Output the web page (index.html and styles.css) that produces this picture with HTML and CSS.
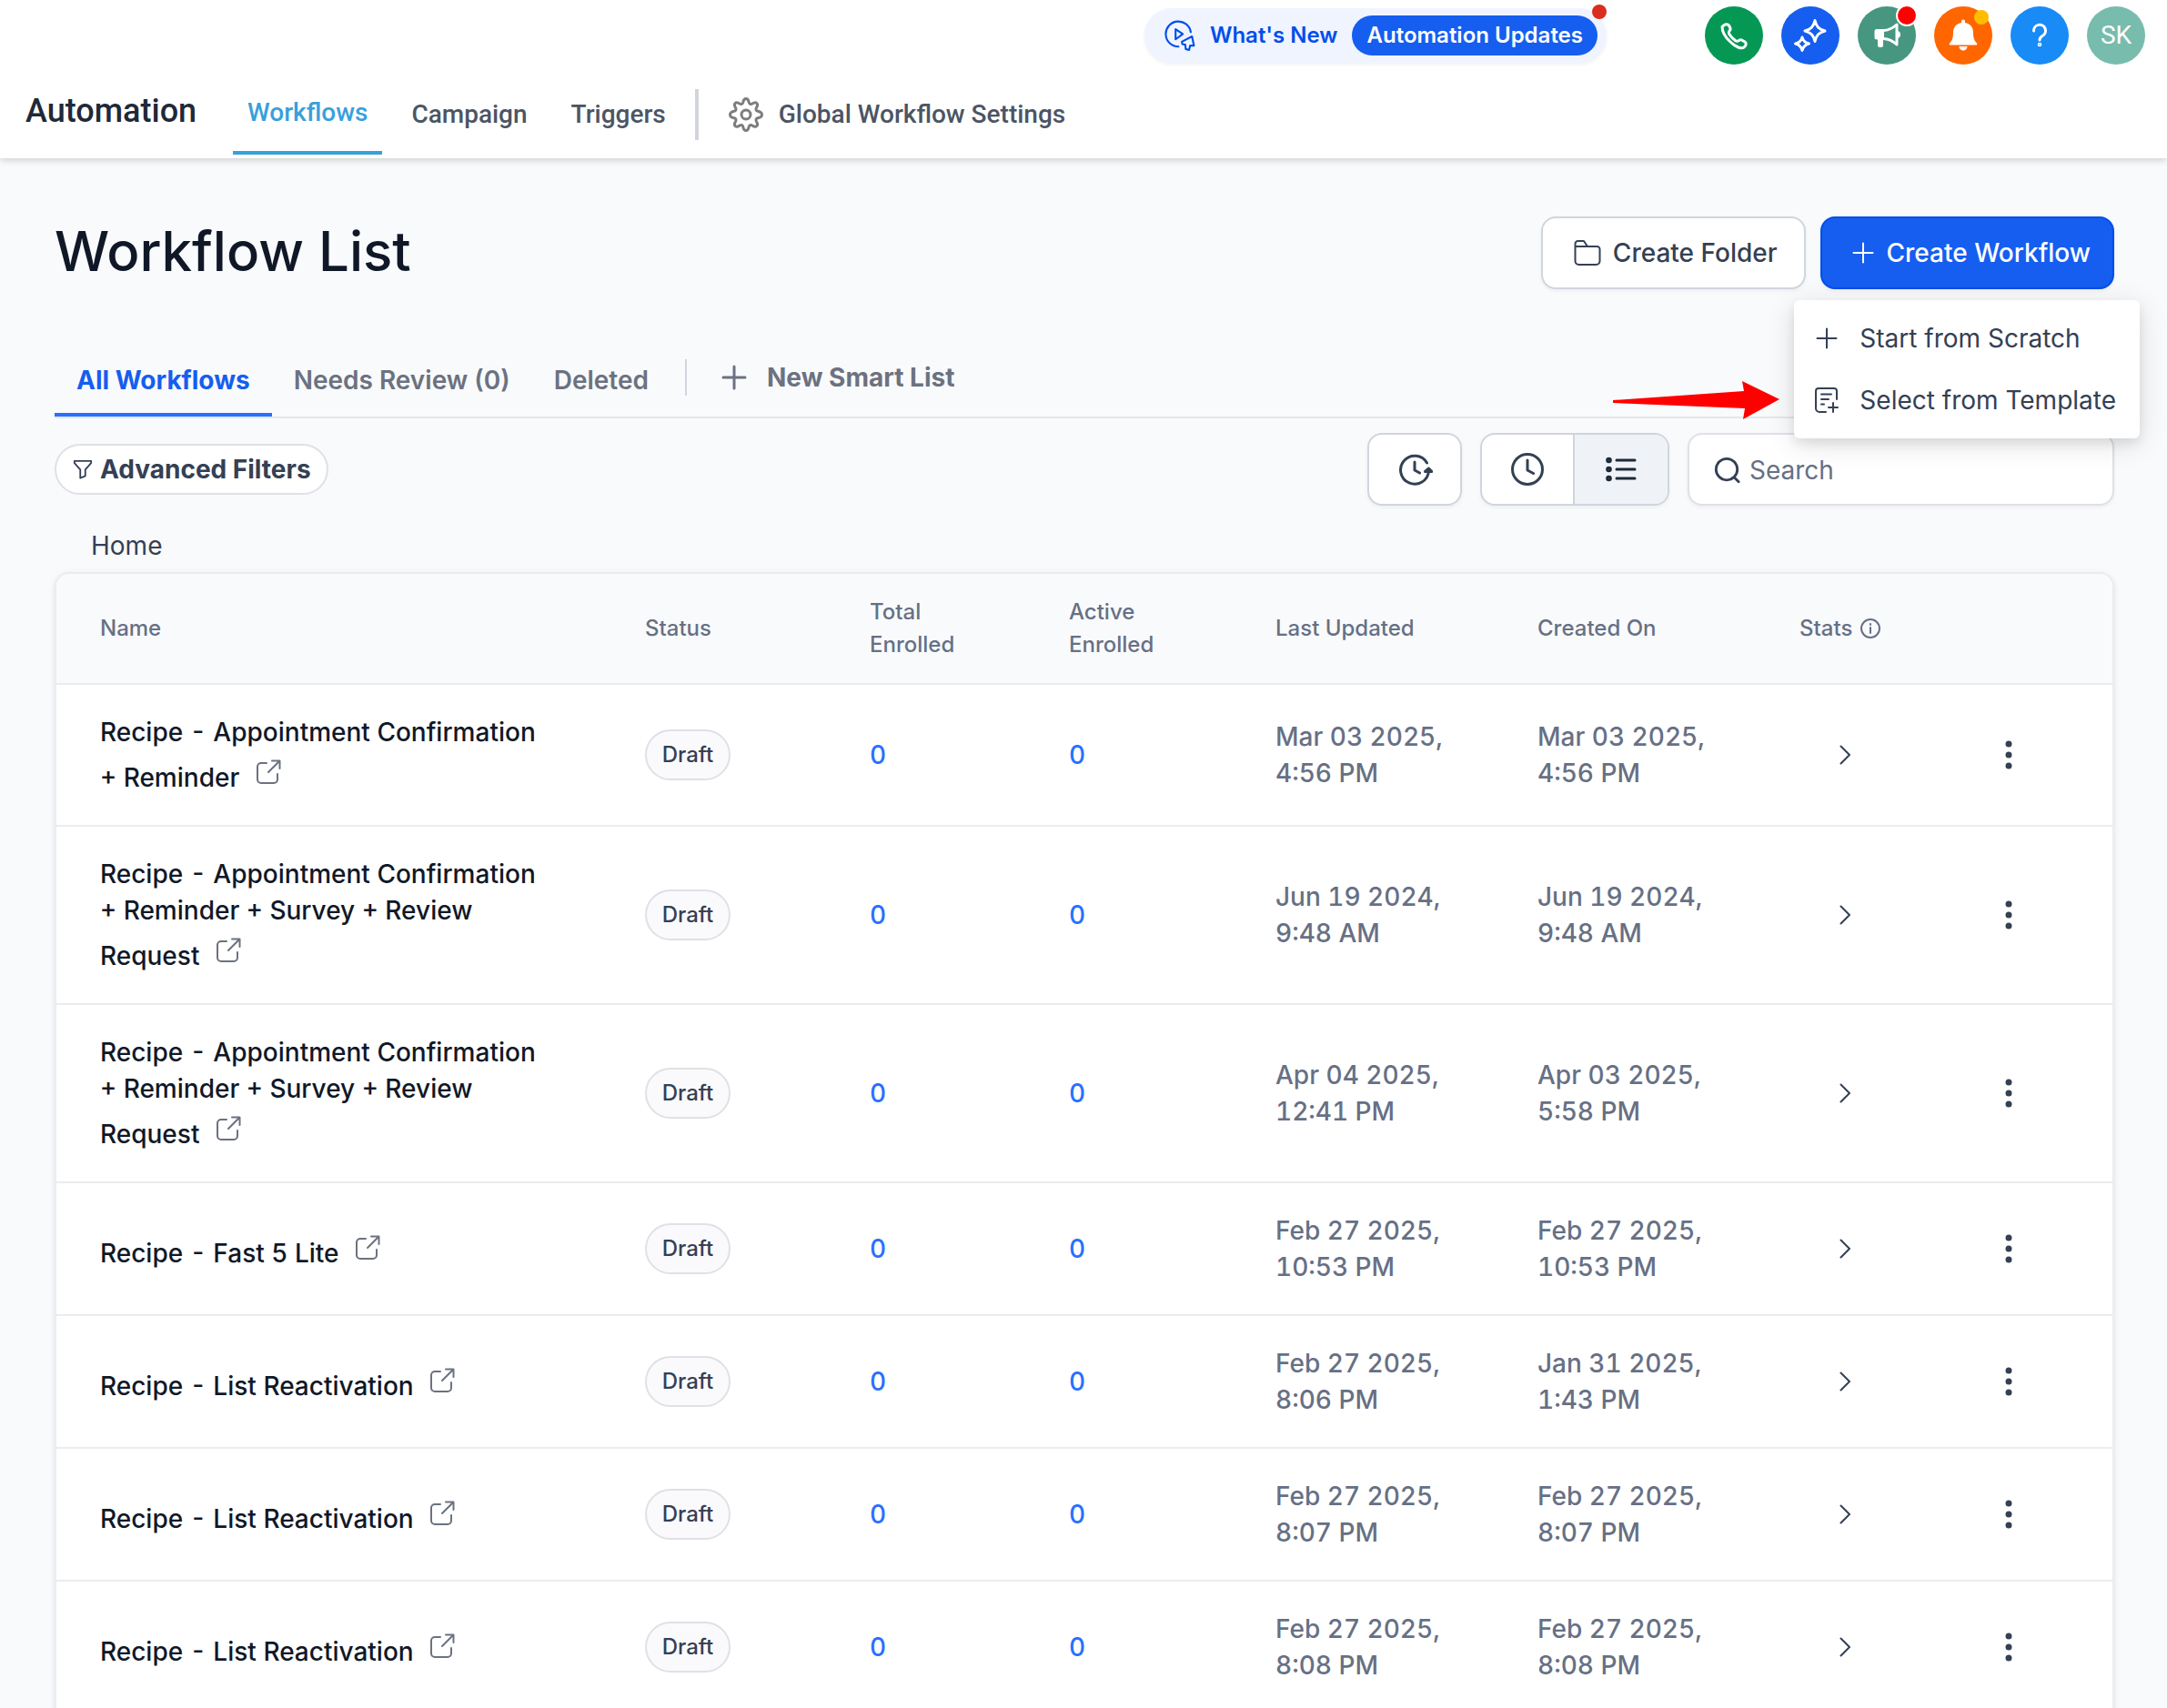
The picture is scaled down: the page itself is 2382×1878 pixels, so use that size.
FILE: index.html
```html
<!DOCTYPE html>
<html lang="en">
<head>
  <meta charset="utf-8">
  <title>Workflow List</title>
  <link rel="stylesheet" href="styles.css">
</head>
<body>
  <!-- icons used more than once -->
  <svg width="0" height="0" class="sprite">
    <symbol id="icon-plus" viewBox="0 0 28 28">
      <path d="M14 3.500v21M3.500 14h21" />
    </symbol>
    <symbol id="icon-open" viewBox="0 0 28 28">
      <path d="M12 4H6a4 4 0 0 0-4 4v14a4 4 0 0 0 4 4h14a4 4 0 0 0 4-4v-6M18 1.500h8.500v8.500M26 2L14 14" />
    </symbol>
    <symbol id="icon-chevron" viewBox="0 0 28 28">
      <path d="M9.500 4.500l9.500 9.500-9.500 9.500" />
    </symbol>
    <symbol id="icon-dots" viewBox="0 0 36 36">
      <circle cx="18" cy="6" r="3.500" /><circle cx="18" cy="18" r="3.500" /><circle cx="18" cy="30" r="3.500" />
    </symbol>
  </svg>

  <header class="header">
    <div class="topbar">
      <div class="whats-new">
        <svg class="play-icon" viewBox="0 0 32 32">
          <path d="M14.500 27.500A13 13 0 1 1 27.200 12.500" />
          <path d="M11.500 9.500v10.500l7.500-5.500z" />
          <path d="M18 22.500l10.500-5.500 2 9.500h-4l-1 4.500-3.500-1-.5-4.500-3-.5z" />
        </svg>
        <a href="#" class="whats-new-link">What's New</a>
        <button type="button" class="updates">Automation Updates</button>
        <span class="pill-dot"></span>
      </div>
      <div class="actions">
        <button type="button" class="circle green" aria-label="Phone">
          <svg viewBox="0 0 40 40" class="line">
            <path d="M7 10.500C10 7 13 7 14.500 9l1.500 3c1 2.500-3 3-1.500 6 2 3.500 4.500 6 7.500 8 3 1.500 4-2.500 6.500-1l3.500 2c2 1.500 1.500 4-1 6-3 2-9 0-15-6-6-5.500-9-11.500-9-16.500z" />
          </svg>
        </button>
        <button type="button" class="circle blue" aria-label="AI assistant">
          <svg viewBox="0 0 40 40" class="line">
            <path d="M25 3.500c1.500 6.500 4 9.500 11 11.500-7 2-9.500 5-11 11.500-1.500-6.500-4-9.500-11-11.500 7-2 9.500-5 11-11.500z" />
            <path d="M11 22c1 4 3 6 7.500 7-4.500 1-6.500 3.500-7.500 7.500-1-4-3-6.500-7.500-7.500 4.500-1 6.500-3 7.500-7z" />
          </svg>
        </button>
        <button type="button" class="circle teal" aria-label="Announcements">
          <svg viewBox="0 0 40 40">
            <path fill="#fff" d="M9 13h8v11.500h-1V31a2 2 0 0 1-2 2h-2a2 2 0 0 1-2-2v-6.500H9A2.500 2.500 0 0 1 6.500 22v-6.500A2.500 2.500 0 0 1 9 13z" />
            <path fill="none" stroke="#fff" stroke-width="3" stroke-linejoin="round" d="M16 14.500c5 0 10-2 15-6.500v22c-5-4.500-10-6.500-15-6.500" />
            <path fill="#fff" d="M31 15a4 4 0 0 1 0 8z" />
          </svg>
          <span class="dot red"></span>
        </button>
        <button type="button" class="circle orange" aria-label="Notifications">
          <svg viewBox="0 0 40 40">
            <path fill="#fff" d="M20 2.500a2 2 0 0 1 2 2v1.500c5.500 1 9 5 9 10.500 0 7 1.500 9.500 4 12 .8 1.500 0 2-1 2H6c-1 0-1.800-.5-1-2 2.500-2.500 4-5 4-12C9 11 12.500 7 18 6V4.500a2 2 0 0 1 2-2zM15.500 32h9a4.500 4.500 0 0 1-9 0z" />
          </svg>
          <span class="dot yellow"></span>
        </button>
        <button type="button" class="circle sky" aria-label="Help">
          <svg viewBox="0 0 40 40" class="line">
            <path d="M13.500 15a6.500 6.500 0 1 1 9.500 5.500c-2 1.200-3 2-3 4.500" />
            <circle cx="20" cy="30" r="0.800" />
          </svg>
        </button>
        <button type="button" class="circle avatar">SK</button>
      </div>
    </div>
    <nav class="nav">
      <span class="nav-title">Automation</span>
      <div class="nav-links">
        <a href="#" class="nav-link active">Workflows</a>
        <a href="#" class="nav-link">Campaign</a>
        <a href="#" class="nav-link">Triggers</a>
        <span class="nav-divider"></span>
        <a href="#" class="nav-link">
          <svg class="gear" viewBox="0 0 40 40">
            <path d="M20 2.500c2.500 0 2.800 2 3.200 4 .4 1.800 2 2.500 3.700 1.500 1.800-1.200 3.500-2 5-.5s.7 3.200-.5 5c-1 1.700-.3 3.300 1.600 3.700 2 .4 4.500 1.300 4.500 3.800s-2.500 3.400-4.500 3.800c-1.900.4-2.600 2-1.600 3.700 1.200 1.800 2 3.500.5 5s-3.200.7-5-.5c-1.700-1-3.300-.3-3.700 1.500-.4 2-.7 4-3.200 4s-2.800-2-3.200-4c-.4-1.800-2-2.500-3.700-1.500-1.800 1.200-3.500 2-5 .5s-.7-3.200.5-5c1-1.700.3-3.300-1.600-3.700-2-.4-4.500-1.300-4.500-3.800s2.500-3.400 4.500-3.800c1.900-.4 2.600-2 1.600-3.700-1.200-1.800-2-3.500-.5-5s3.200-.7 5 .5c1.700 1 3.300.3 3.700-1.500.4-2 .7-4 3.200-4z" />
            <circle cx="20" cy="20" r="5" />
          </svg>
          Global Workflow Settings
        </a>
      </div>
    </nav>
  </header>

  <main class="main">
    <div class="title-row">
      <h1>Workflow List</h1>
      <div class="buttons">
        <button type="button" class="btn">
          <svg class="icon-folder" viewBox="0 0 32 32">
            <path d="M2.500 25V6a3 3 0 0 1 3-3h6.500l4 6h10.500a3 3 0 0 1 3 3v13a4 4 0 0 1-4 4h-19a4 4 0 0 1-4-4zM2.500 9h14" />
          </svg>
          Create Folder
        </button>
        <div class="create">
          <button type="button" class="btn btn-primary">
            <svg class="icon"><use href="#icon-plus" /></svg>
            Create Workflow
          </button>
          <div class="menu">
            <button type="button" class="menu-item">
              <svg class="icon"><use href="#icon-plus" /></svg>
              Start from Scratch
            </button>
            <button type="button" class="menu-item">
              <svg class="icon" viewBox="0 0 28 28">
                <path d="M13 27H6a4 4 0 0 1-4-4V4a3 3 0 0 1 3-3h17a3 3 0 0 1 3 3v9M8 7.500h11M8 13h8M8 18.500h3M21 17v10M16 22h10" />
              </svg>
              Select from Template
            </button>
          </div>
          <svg class="arrow" viewBox="0 0 184 42">
            <path d="M1 21L145 11L143 0L184 20L144 42L146 30L1 24z" />
          </svg>
        </div>
      </div>
    </div>

    <div class="tabs">
      <button type="button" class="tab active">All Workflows</button>
      <button type="button" class="tab">Needs Review (0)</button>
      <button type="button" class="tab">Deleted</button>
      <span class="tabs-divider"></span>
      <button type="button" class="smart-list">
        <svg viewBox="0 0 28 28"><path d="M14 2v24M2 14h24" /></svg>
        New Smart List
      </button>
    </div>

    <div class="toolbar">
      <button type="button" class="filters">
        <svg viewBox="0 0 24 24">
          <path d="M2 2h20v2.500l-7 8V20l-6 2.500v-10l-7-8z" />
        </svg>
        Advanced Filters
      </button>
      <div class="tools">
        <button type="button" class="tool" aria-label="History">
          <svg viewBox="0 0 40 40">
            <path d="M33.500 13A15.500 15.500 0 1 0 35.500 22M20 12v9l5.500 3" />
            <path d="M31.500 22.500l4-3.500 3.500 3.500z" fill="#344054" />
          </svg>
        </button>
        <div class="tool-group">
          <button type="button" class="first" aria-label="Recent">
            <svg viewBox="0 0 40 40">
              <circle cx="20" cy="20" r="16.500" />
              <path d="M20 10v11l6.500 3.500" />
            </svg>
          </button>
          <button type="button" class="selected" aria-label="List view">
            <svg viewBox="0 0 40 40">
              <path d="M15 10h20M15 20h20M15 30h20" />
              <circle cx="6.500" cy="10" r="1.800" /><circle cx="6.500" cy="20" r="1.800" /><circle cx="6.500" cy="30" r="1.800" />
            </svg>
          </button>
        </div>
        <label class="search">
          <svg viewBox="0 0 32 32">
            <circle cx="16" cy="15" r="12.500" />
            <path d="M25 24.500l5 5" />
          </svg>
          <input type="text" placeholder="Search" aria-label="Search">
        </label>
      </div>
    </div>

    <a href="#" class="home">Home</a>

    <div class="table-box">
      <table>
        <colgroup>
          <col>
          <col class="col-status">
          <col class="col-total">
          <col class="col-active">
          <col class="col-date">
          <col class="col-date">
          <col class="col-end">
          <col class="col-end">
        </colgroup>
        <thead>
          <tr>
            <th>Name</th>
            <th>Status</th>
            <th>Total Enrolled</th>
            <th>Active Enrolled</th>
            <th>Last Updated</th>
            <th>Created On</th>
            <th class="stats">
              <span>Stats
                <svg viewBox="0 0 24 24"><circle cx="12" cy="12" r="10" /><path d="M12 11v6M12 7v1" /></svg>
              </span>
            </th>
            <th></th>
          </tr>
        </thead>
        <tbody>
          <tr>
            <td class="name"><a href="#">Recipe - Appointment Confirmation + Reminder <svg><use href="#icon-open" /></svg></a></td>
            <td><span class="badge">Draft</span></td>
            <td><a href="#" class="count">0</a></td>
            <td><a href="#" class="count">0</a></td>
            <td class="date">Mar 03 2025, 4:56 PM</td>
            <td class="date">Mar 03 2025, 4:56 PM</td>
            <td class="expand"><button type="button" aria-label="Stats"><svg class="chevron"><use href="#icon-chevron" /></svg></button></td>
            <td class="more"><button type="button" aria-label="More"><svg class="dots"><use href="#icon-dots" /></svg></button></td>
          </tr>
          <tr>
            <td class="name"><a href="#">Recipe - Appointment Confirmation + Reminder + Survey + Review Request <svg><use href="#icon-open" /></svg></a></td>
            <td><span class="badge">Draft</span></td>
            <td><a href="#" class="count">0</a></td>
            <td><a href="#" class="count">0</a></td>
            <td class="date">Jun 19 2024, 9:48 AM</td>
            <td class="date">Jun 19 2024, 9:48 AM</td>
            <td class="expand"><button type="button" aria-label="Stats"><svg class="chevron"><use href="#icon-chevron" /></svg></button></td>
            <td class="more"><button type="button" aria-label="More"><svg class="dots"><use href="#icon-dots" /></svg></button></td>
          </tr>
          <tr>
            <td class="name"><a href="#">Recipe - Appointment Confirmation + Reminder + Survey + Review Request <svg><use href="#icon-open" /></svg></a></td>
            <td><span class="badge">Draft</span></td>
            <td><a href="#" class="count">0</a></td>
            <td><a href="#" class="count">0</a></td>
            <td class="date">Apr 04 2025, 12:41 PM</td>
            <td class="date">Apr 03 2025, 5:58 PM</td>
            <td class="expand"><button type="button" aria-label="Stats"><svg class="chevron"><use href="#icon-chevron" /></svg></button></td>
            <td class="more"><button type="button" aria-label="More"><svg class="dots"><use href="#icon-dots" /></svg></button></td>
          </tr>
          <tr>
            <td class="name"><a href="#">Recipe - Fast 5 Lite <svg><use href="#icon-open" /></svg></a></td>
            <td><span class="badge">Draft</span></td>
            <td><a href="#" class="count">0</a></td>
            <td><a href="#" class="count">0</a></td>
            <td class="date">Feb 27 2025, 10:53 PM</td>
            <td class="date">Feb 27 2025, 10:53 PM</td>
            <td class="expand"><button type="button" aria-label="Stats"><svg class="chevron"><use href="#icon-chevron" /></svg></button></td>
            <td class="more"><button type="button" aria-label="More"><svg class="dots"><use href="#icon-dots" /></svg></button></td>
          </tr>
          <tr>
            <td class="name"><a href="#">Recipe - List Reactivation <svg><use href="#icon-open" /></svg></a></td>
            <td><span class="badge">Draft</span></td>
            <td><a href="#" class="count">0</a></td>
            <td><a href="#" class="count">0</a></td>
            <td class="date">Feb 27 2025, 8:06 PM</td>
            <td class="date">Jan 31 2025, 1:43 PM</td>
            <td class="expand"><button type="button" aria-label="Stats"><svg class="chevron"><use href="#icon-chevron" /></svg></button></td>
            <td class="more"><button type="button" aria-label="More"><svg class="dots"><use href="#icon-dots" /></svg></button></td>
          </tr>
          <tr>
            <td class="name"><a href="#">Recipe - List Reactivation <svg><use href="#icon-open" /></svg></a></td>
            <td><span class="badge">Draft</span></td>
            <td><a href="#" class="count">0</a></td>
            <td><a href="#" class="count">0</a></td>
            <td class="date">Feb 27 2025, 8:07 PM</td>
            <td class="date">Feb 27 2025, 8:07 PM</td>
            <td class="expand"><button type="button" aria-label="Stats"><svg class="chevron"><use href="#icon-chevron" /></svg></button></td>
            <td class="more"><button type="button" aria-label="More"><svg class="dots"><use href="#icon-dots" /></svg></button></td>
          </tr>
          <tr>
            <td class="name"><a href="#">Recipe - List Reactivation <svg><use href="#icon-open" /></svg></a></td>
            <td><span class="badge">Draft</span></td>
            <td><a href="#" class="count">0</a></td>
            <td><a href="#" class="count">0</a></td>
            <td class="date">Feb 27 2025, 8:08 PM</td>
            <td class="date">Feb 27 2025, 8:08 PM</td>
            <td class="expand"><button type="button" aria-label="Stats"><svg class="chevron"><use href="#icon-chevron" /></svg></button></td>
            <td class="more"><button type="button" aria-label="More"><svg class="dots"><use href="#icon-dots" /></svg></button></td>
          </tr>
        </tbody>
      </table>
    </div>
  </main>
</body>
</html>
```
FILE: styles.css
```css
* {
  box-sizing: border-box;
}

body {
  margin: 0;
  height: 100vh;
  overflow: hidden;
  background: #f9fafc;
  font-family: Inter, sans-serif;
  font-size: 28px;
  line-height: 40px;
  color: #344054;
}

a {
  color: inherit;
  text-decoration: none;
}

button {
  margin: 0;
  padding: 0;
  border: none;
  background: none;
  font: inherit;
  color: inherit;
  cursor: pointer;
}

svg {
  flex: none;
  fill: none;
  stroke: currentColor;
  stroke-width: 2;
  stroke-linecap: round;
  stroke-linejoin: round;
}

.sprite {
  position: absolute;
}

/* header */
.header {
  position: relative;
  background: #fff;
  padding: 7px 0 4px;
  box-shadow: 0 2px 8px rgba(0, 0, 0, 0.18);
}

.topbar {
  display: flex;
  justify-content: flex-end;
  align-items: center;
  gap: 108px;
  padding: 0 24px;
}

.whats-new {
  position: relative;
  display: flex;
  align-items: center;
  gap: 16px;
  height: 60px;
  padding: 0 10px 0 22px;
  border-radius: 30px;
  background: #eff4ff;
  box-shadow: 0 2px 4px rgba(16, 24, 40, 0.06);
  color: #004eeb;
  font-size: 24px;
  font-weight: 600;
}

.play-icon {
  width: 34px;
  height: 34px;
}

.updates {
  height: 44px;
  padding: 0 16px;
  border-radius: 22px;
  background: #155eef;
  color: #fff;
}

.pill-dot {
  position: absolute;
  top: -4px;
  right: 0;
  width: 16px;
  height: 16px;
  border-radius: 50%;
  background: #d92d20;
}

.actions {
  display: flex;
  gap: 20px;
}

.circle {
  position: relative;
  display: flex;
  align-items: center;
  justify-content: center;
  width: 64px;
  height: 64px;
  border-radius: 50%;
  color: #fff;
}

.circle svg {
  width: 40px;
  height: 40px;
  stroke: none;
}

.circle .line {
  stroke: #fff;
  stroke-width: 3;
}

.green { background: #059855; }
.blue { background: #155eef; }
.teal { background: #479680; }
.orange { background: #ff6600; }
.sky { background: #188bf6; }

.avatar {
  background: #77bcad;
  font-family: Roboto, sans-serif;
}

.dot {
  position: absolute;
  border-radius: 50%;
}

.dot.red {
  top: 0;
  right: 0;
  width: 20px;
  height: 20px;
  background: #f00;
  box-shadow: 0 0 0 2px #fff;
}

.dot.yellow {
  top: 4px;
  right: 4px;
  width: 16px;
  height: 16px;
  background: #ffbc00;
}

.nav {
  display: flex;
  align-items: flex-end;
  gap: 40px;
  height: 99px;
  padding-left: 28px;
  font-family: Roboto, sans-serif;
  font-weight: 500;
  color: #4b5563;
}

.nav-title {
  margin-bottom: 24px;
  font-size: 36px;
  line-height: 48px;
  color: #1f2937;
}

.nav-links {
  display: flex;
  align-items: flex-end;
  gap: 16px;
}

.nav-link {
  display: flex;
  align-items: center;
  gap: 16px;
  padding: 0 16px 20px;
  border-bottom: 4px solid transparent;
}

.nav-link.active {
  padding-bottom: 22px;
  border-color: #38a0db;
  color: #38a0db;
}

.nav-divider {
  width: 4px;
  height: 56px;
  margin-bottom: 16px;
  background: #d1d5db;
}

.gear {
  width: 40px;
  height: 40px;
  color: #7d7d7d;
  stroke-width: 3;
}

/* title and buttons */
.main {
  padding: 64px 58px 0 60px;
}

.title-row {
  display: flex;
  justify-content: space-between;
  align-items: flex-start;
}

h1 {
  margin: 0;
  font-size: 60px;
  font-weight: 500;
  line-height: 76px;
  color: #101828;
}

.buttons {
  display: flex;
  gap: 16px;
}

.btn {
  display: flex;
  align-items: center;
  gap: 12px;
  height: 80px;
  padding: 0 29px 0 33px;
  border: 2px solid #d0d5dd;
  border-radius: 16px;
  background: #fff;
  box-shadow: 0 2px 4px rgba(16, 24, 40, 0.05);
  font-weight: 500;
}

.btn-primary {
  padding: 0 24px 0 31px;
  border-color: #004eeb;
  background: #155eef;
  color: #fff;
}

.icon {
  width: 28px;
  height: 28px;
}

.icon-folder {
  width: 32px;
  height: 32px;
}

.create {
  position: relative;
}

.menu {
  position: absolute;
  z-index: 2;
  top: 92px;
  right: -28px;
  padding: 8px 0;
  border-radius: 6px;
  background: #fff;
  box-shadow: 0 6px 32px rgba(0, 0, 0, 0.12), 0 6px 12px rgba(0, 0, 0, 0.08);
}

.menu-item {
  display: flex;
  align-items: center;
  gap: 22px;
  width: 100%;
  height: 68px;
  padding: 0 26px 0 22px;
  white-space: nowrap;
}

.arrow {
  position: absolute;
  z-index: 3;
  top: 181px;
  right: 368px;
  width: 184px;
  height: 42px;
  fill: #f00;
  stroke: none;
}

/* tabs */
.tabs {
  display: flex;
  align-items: flex-end;
  height: 142px;
  border-bottom: 2px solid #e4e7ec;
  color: #6b7280;
  font-weight: 600;
}

.tab {
  padding: 0 24px 16px;
  border-bottom: 4px solid transparent;
}

.tab.active {
  border-color: #2970ff;
  color: #155eef;
  font-weight: 700;
}

.tabs-divider {
  width: 2px;
  height: 40px;
  margin: 0 38px 23px 16px;
  background: #d0d5dd;
}

.smart-list {
  display: flex;
  align-items: center;
  gap: 22px;
  margin-bottom: 23px;
  font-weight: 700;
}

.smart-list svg {
  width: 28px;
  height: 28px;
  stroke-width: 3;
}

/* toolbar */
.toolbar {
  display: flex;
  justify-content: space-between;
  align-items: center;
  margin-top: 16px;
}

.filters {
  display: flex;
  align-items: center;
  gap: 8px;
  height: 56px;
  padding: 0 17px 0 18px;
  border: 2px solid #e0e0e6;
  border-radius: 28px;
  background: #fff;
  font-weight: 700;
}

.filters svg {
  width: 22px;
  height: 22px;
}

.tools {
  display: flex;
  gap: 20px;
}

.tool,
.tool-group,
.search {
  height: 80px;
  border: 2px solid #d0d5dd;
  border-radius: 16px;
  background: #fff;
  box-shadow: 0 2px 4px rgba(16, 24, 40, 0.05);
}

.tool {
  width: 104px;
}

.tool svg,
.tool-group svg {
  display: block;
  width: 40px;
  height: 40px;
  margin: 0 auto;
  stroke-width: 3;
}

.tool-group {
  display: flex;
  width: 208px;
  overflow: hidden;
}

.tool-group .first {
  width: 100px;
}

.tool-group .selected {
  flex: 1;
  border-left: 2px solid #d0d5dd;
  background: #eff3f7;
  color: #1d2939;
}

.search {
  display: flex;
  align-items: center;
  gap: 10px;
  width: 469px;
  padding: 2px 26px 0;
  border-color: #e0e0e6;
}

.search svg {
  width: 30px;
  height: 30px;
  stroke-width: 3;
}

.search input {
  flex: 1;
  min-width: 0;
  padding: 0;
  border: none;
  outline: none;
  background: none;
  font: inherit;
}

.search input::placeholder {
  color: #667085;
}

.home {
  display: block;
  margin: 24px 0 9px;
  padding-left: 40px;
}

/* table */
.table-box {
  border: 2px solid #eaecf0;
  border-radius: 16px 16px 0 0;
  overflow: hidden;
  background: #fff;
  box-shadow: 0 2px 6px rgba(16, 24, 40, 0.1);
}

table {
  width: 100%;
  table-layout: fixed;
  border-collapse: separate;
  border-spacing: 0;
  font-variant-numeric: tabular-nums;
}

.col-status { width: 247px; }
.col-total { width: 219px; }
.col-active { width: 227px; }
.col-date { width: 288px; }
.col-end { width: 196px; }

th,
td {
  padding: 32px 48px;
  border-bottom: 2px solid #eaecf0;
  text-align: left;
  vertical-align: middle;
}

th {
  padding: 24px 48px;
  background: #f9fafc;
  font-size: 24px;
  line-height: 36px;
  font-weight: 500;
  color: #667085;
}

.stats {
  padding-right: 0;
}

.stats span {
  display: flex;
  align-items: center;
  gap: 8px;
}

.stats svg {
  width: 24px;
  height: 24px;
}

.name {
  padding-right: 60px;
  font-weight: 500;
  color: #101828;
}

/* the icon stands taller than the line and makes the last line 50px high */
.name svg {
  width: 28px;
  height: 40px;
  margin-left: 10px;
  padding: 10px 0 2px;
  color: #6b7280;
}

.badge {
  display: block;
  width: 94px;
  height: 56px;
  border: 2px solid #e0e0e6;
  border-radius: 28px;
  background: #fafafc;
  font-size: 24px;
  font-weight: 500;
  line-height: 52px;
  text-align: center;
}

td:nth-child(2) {
  padding-top: 0;
  padding-bottom: 0;
}

.count {
  font-weight: 500;
  color: #2970ff;
}

.date {
  font-weight: 500;
  color: #667085;
}

.expand button,
.more button {
  display: block;
}

.expand button {
  margin: 0 auto;
}

.expand svg,
.more svg {
  display: block;
}

.chevron {
  width: 28px;
  height: 28px;
}

.more {
  padding-left: 64px;
}

.dots {
  width: 36px;
  height: 36px;
  fill: #344054;
  stroke: none;
}
```
